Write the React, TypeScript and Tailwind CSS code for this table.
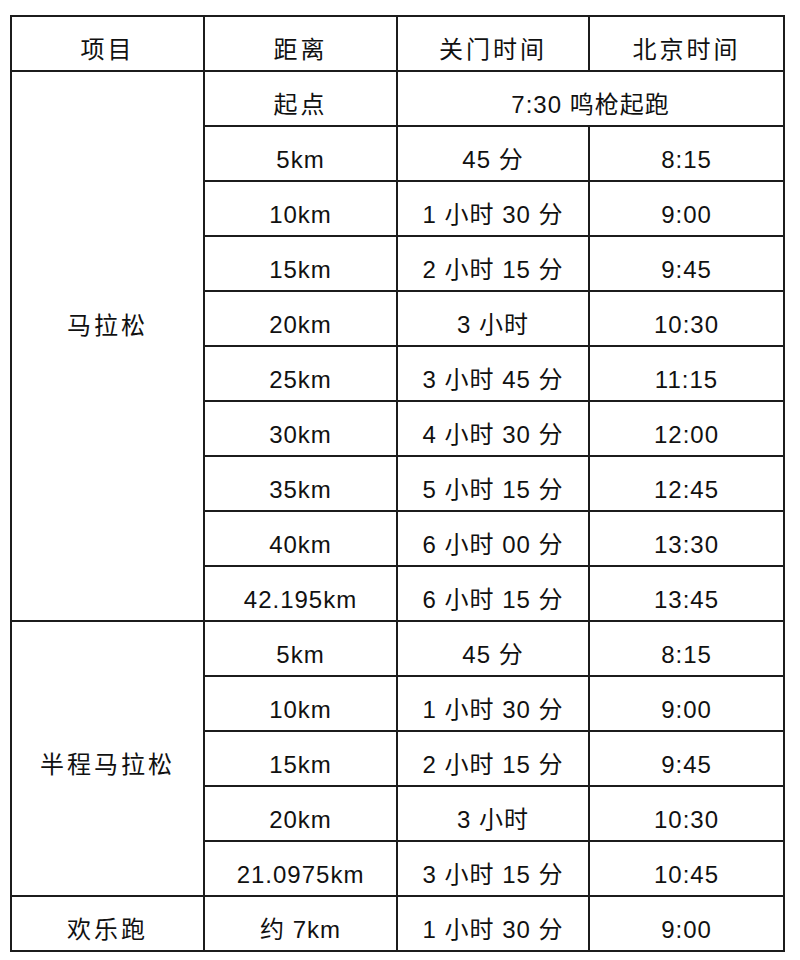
import React from 'react';

type Row = { dist: string; close: string; bj: string };

const marathon: Row[] = [
  { dist: '5km', close: '45 分', bj: '8:15' },
  { dist: '10km', close: '1 小时 30 分', bj: '9:00' },
  { dist: '15km', close: '2 小时 15 分', bj: '9:45' },
  { dist: '20km', close: '3 小时', bj: '10:30' },
  { dist: '25km', close: '3 小时 45 分', bj: '11:15' },
  { dist: '30km', close: '4 小时 30 分', bj: '12:00' },
  { dist: '35km', close: '5 小时 15 分', bj: '12:45' },
  { dist: '40km', close: '6 小时 00 分', bj: '13:30' },
  { dist: '42.195km', close: '6 小时 15 分', bj: '13:45' },
];

const half: Row[] = [
  { dist: '5km', close: '45 分', bj: '8:15' },
  { dist: '10km', close: '1 小时 30 分', bj: '9:00' },
  { dist: '15km', close: '2 小时 15 分', bj: '9:45' },
  { dist: '20km', close: '3 小时', bj: '10:30' },
  { dist: '21.0975km', close: '3 小时 15 分', bj: '10:45' },
];

const td = 'border-2 border-[#1c1c1c] h-[55px] pt-[12px] pb-0 text-center align-middle';

export default function App() {
  return (
    <div className="w-[800px] h-[960px] bg-white pt-[15px] pl-[10px]">
      <table
        className="w-[773px] table-fixed border-collapse text-[#111] text-[24px] leading-none tracking-[1px]"
        style={{ fontFamily: '"Liberation Sans", "Noto Sans CJK SC", sans-serif' }}
      >
        <colgroup>
          <col className="w-[193px]" />
          <col className="w-[193px]" />
          <col className="w-[192px]" />
          <col className="w-[195px]" />
        </colgroup>
        <tbody>
          <tr>
            <td className={`${td} tracking-[3px]`}>项目</td>
            <td className={`${td} tracking-[3px]`}>距离</td>
            <td className={`${td} tracking-[3px]`}>关门时间</td>
            <td className={`${td} tracking-[3px]`}>北京时间</td>
          </tr>
          <tr>
            <td rowSpan={10} className="border-2 border-[#1c1c1c] text-center align-middle pb-[40px] tracking-[3px]">
              马拉松
            </td>
            <td className={`${td} tracking-[3px]`}>起点</td>
            <td colSpan={2} className={td}>7:30 鸣枪起跑</td>
          </tr>
          {marathon.map((r) => (
            <tr key={'m' + r.dist}>
              <td className={td}>{r.dist}</td>
              <td className={td}>{r.close}</td>
              <td className={td}>{r.bj}</td>
            </tr>
          ))}
          {half.map((r, i) => (
            <tr key={'h' + r.dist}>
              {i === 0 && (
                <td rowSpan={5} className="border-2 border-[#1c1c1c] text-center align-middle pt-[12px] tracking-[3px]">
                  半程马拉松
                </td>
              )}
              <td className={td}>{r.dist}</td>
              <td className={td}>{r.close}</td>
              <td className={td}>{r.bj}</td>
            </tr>
          ))}
          <tr>
            <td className={`${td} tracking-[3px]`}>欢乐跑</td>
            <td className={td}>约 7km</td>
            <td className={td}>1 小时 30 分</td>
            <td className={td}>9:00</td>
          </tr>
        </tbody>
      </table>
    </div>
  );
}
